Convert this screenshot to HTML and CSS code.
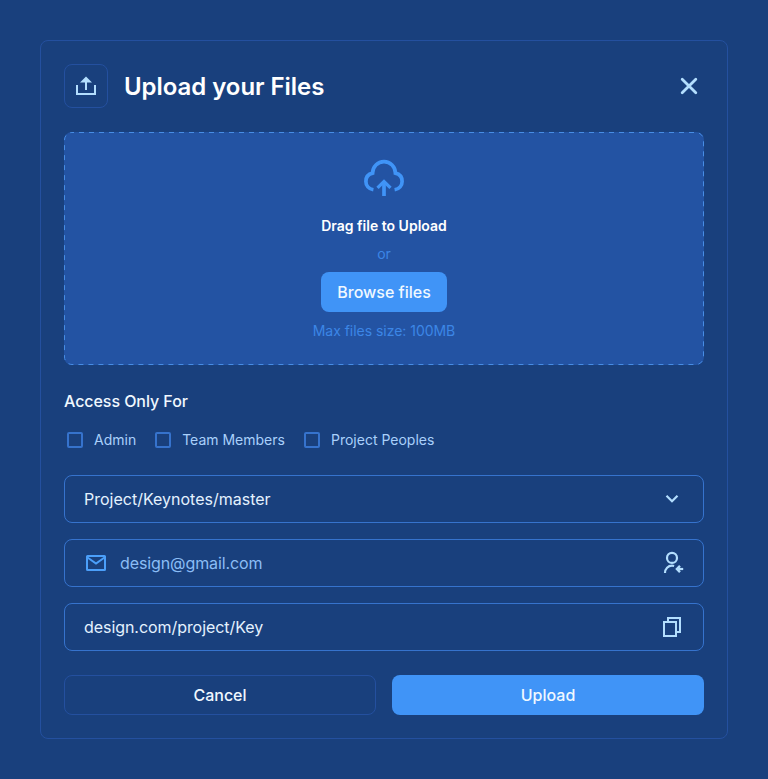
FILE: index.html
```html
<!DOCTYPE html>
<html lang="en">
<head>
<meta charset="utf-8">
<title>Upload your Files</title>
<link rel="stylesheet" href="styles.css">
</head>
<body>
<main class="card">
  <header class="header">
    <span class="header-icon">
      <svg width="24" height="24" viewBox="0 0 24 24"><path d="M3 11V20H21V11M12 16V7" fill="none" stroke="currentColor" stroke-width="2"/><path d="M12 2.600l6 5.900H6z" fill="currentColor"/></svg>
    </span>
    <h1 class="title">Upload your Files</h1>
    <button class="close" aria-label="Close">
      <svg width="30" height="30" viewBox="0 0 30 30"><path d="M8.200 8.200l13.600 13.600M21.800 8.200L8.200 21.800" fill="none" stroke="currentColor" stroke-width="2.800" stroke-linecap="round"/></svg>
    </button>
  </header>

  <section class="drop">
    <svg class="drop-outline" width="640" height="233"><rect x=".5" y=".5" width="639" height="232" rx="7.5" fill="none" stroke="currentColor" stroke-dasharray="5 5" stroke-dashoffset="3"/></svg>
    <svg class="cloud" width="48" height="48" viewBox="0 0 48 48" fill="none" stroke="currentColor" stroke-width="3.700"><path d="M13.400 35.700C8.600 34.900 5.900 31.500 5.900 27.400C5.900 23.200 8.600 20 12.600 19.100A11.400 11.400 0 0 1 35.400 19.100C39.400 20 42.100 23.200 42.100 27.400C42.100 31.500 39.400 34.900 34.600 35.700"/><path d="M24 42V29"/><path d="M17.500 33.900L24 27.600l6.500 6.300" stroke-width="3.300"/></svg>
    <strong class="drop-title">Drag file to Upload</strong>
    <span class="hint">or</span>
    <button class="btn primary browse">Browse files</button>
    <span class="hint limit">Max files size: 100MB</span>
  </section>

  <h2 class="subtitle">Access Only For</h2>
  <div class="checks">
    <label class="check"><span class="box"></span>Admin</label>
    <label class="check"><span class="box"></span>Team Members</label>
    <label class="check"><span class="box"></span>Project Peoples</label>
  </div>

  <div class="fields">
    <div class="field">
      <span class="value path">Project/Keynotes/master</span>
      <svg width="24" height="24" viewBox="0 0 24 24"><path d="M6.500 8.800l5.500 5.500 5.500-5.500" fill="none" stroke="currentColor" stroke-width="2.200"/></svg>
    </div>
    <div class="field">
      <svg class="mail" width="24" height="24" viewBox="0 0 24 24" fill="none" stroke="currentColor" stroke-width="2"><rect x="3" y="5" width="18" height="14" rx=".5"/><path d="M3.500 6.500l8.500 6 8.500-6"/></svg>
      <span class="value placeholder">design@gmail.com</span>
      <svg width="24" height="24" viewBox="0 0 24 24" fill="none" stroke="currentColor" stroke-width="2.200"><circle cx="12" cy="6.900" r="5"/><path d="M5 22c0-4.300 3.200-7.300 7-7.300.8 0 1.500.1 2.100.3"/><path d="M23.200 18h-5"/><path d="M20 14.800L16.900 18l3.100 3.200" stroke-width="2.400"/></svg>
    </div>
    <div class="field">
      <span class="value">design.com/project/Key</span>
      <svg width="24" height="24" viewBox="0 0 24 24" fill="none" stroke="currentColor" stroke-width="2"><path d="M4 7h12v14H4zM8 7V3h12v14h-4"/></svg>
    </div>
  </div>

  <footer class="actions">
    <button class="btn outline">Cancel</button>
    <button class="btn primary">Upload</button>
  </footer>
</main>
</body>
</html>
```
FILE: styles.css
```css
* { box-sizing: border-box; }
body {
  margin: 0;
  padding: 40px;
  background: #19407d;
  color: #f0f8ff;
  font-family: Inter, "Liberation Sans", sans-serif;
}
svg { display: block; flex: none; }
button { font: inherit; color: inherit; border: 0; background: none; padding: 0; }
.card {
  height: 699px;
  padding: 23px;
  border: 1px solid #24509f;
  border-radius: 8px;
}
.header { display: flex; align-items: center; height: 44px; }
.header-icon {
  display: grid;
  place-items: center;
  width: 44px;
  height: 44px;
  border: 1px solid #24509f;
  border-radius: 8px;
  color: #b3defe;
}
.title { flex: 1; margin: 2px 0 0 16px; font-size: 24px; line-height: 32px; font-weight: 600; letter-spacing: -.05px; color: #fff; }
.close { color: #b3defe; }
.drop {
  position: relative;
  display: flex;
  flex-direction: column;
  align-items: center;
  height: 233px;
  margin-top: 24px;
  padding-top: 22px;
  border-radius: 8px;
  background: #2353a3;
}
.drop-outline { position: absolute; inset: 0; color: #478de5; }
.cloud { color: #4094f7; }
.drop-title { margin-top: 14px; font-size: 14px; line-height: 20px; font-weight: 600; color: #fff; }
.hint { margin-top: 8px; font-size: 14px; line-height: 20px; letter-spacing: -.03px; color: #3c86e6; }
.btn { height: 40px; border-radius: 8px; font-size: 16px; line-height: 24px; font-weight: 500; }
.primary { background: #4094f7; }
.browse { width: 126px; margin-top: 8px; }
.limit { margin-top: 9px; }
.subtitle { margin: 24px 0 0; font-size: 16px; line-height: 24px; font-weight: 500; letter-spacing: -.06px; }
.checks { display: flex; gap: 16px; margin-top: 17px; }
.check { display: flex; align-items: center; gap: 8px; font-size: 14px; line-height: 20px; color: #a9d0fb; }
.box { width: 16px; height: 16px; margin: 0 3px; border: 2px solid #3673cd; border-radius: 2px; }
.fields { display: grid; gap: 16px; margin-top: 25px; }
.field {
  display: flex;
  align-items: center;
  height: 48px;
  padding: 0 19px;
  border: 1px solid #3673cd;
  border-radius: 8px;
  color: #b3defe;
}
.value { flex: 1; font-size: 16px; line-height: 24px; letter-spacing: -.06px; color: #e4f2ff; }
.path { letter-spacing: 0; }
.mail { margin-right: 12px; color: #4b9ffa; }
.placeholder { letter-spacing: -.1px; color: #8bbdf5; }
.actions { display: grid; grid-template-columns: 1fr 1fr; gap: 16px; margin-top: 24px; }
.outline { border: 1px solid #24509f; }
```
